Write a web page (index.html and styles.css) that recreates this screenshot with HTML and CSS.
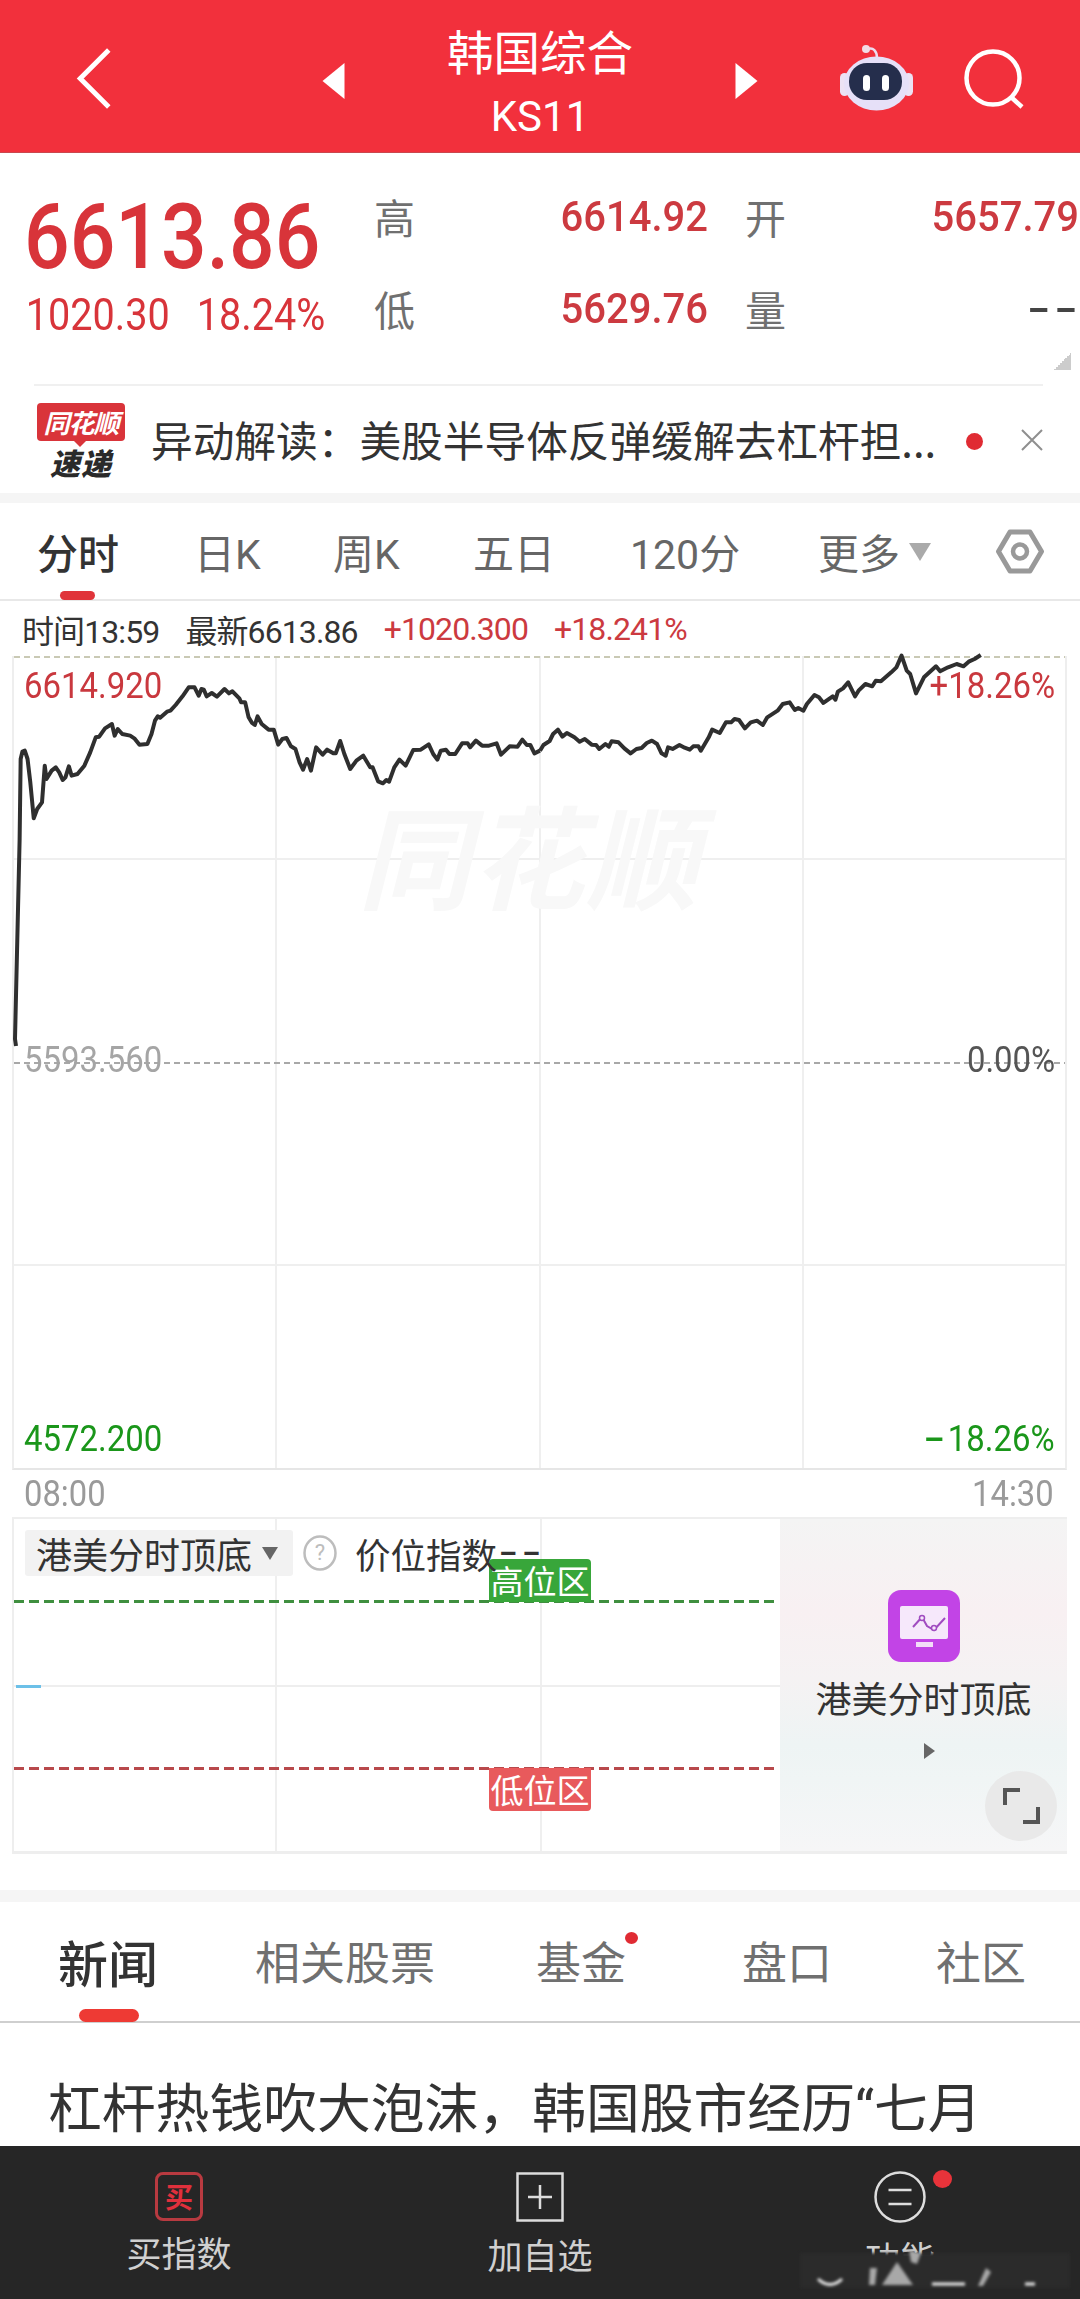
FILE: index.html
```html
<!DOCTYPE html>
<html lang="zh">
<head>
<meta charset="utf-8">
<title>韩国综合 KS11</title>
<link rel="stylesheet" href="styles.css">
</head>
<body>
<div class="page">
  <header class="hdr">
    <svg class="back" viewBox="0 0 36 64"><path d="M33 3 4 32l29 29" fill="none" stroke="#fff" stroke-width="5"/></svg>
    <svg class="arr arr-l" viewBox="0 0 22 36"><path d="M22 0v36L0 18z" fill="#fff"/></svg>
    <div class="hdr-title">
      <div class="hdr-name">韩国综合</div>
      <div class="hdr-code">KS11</div>
    </div>
    <svg class="arr arr-r" viewBox="0 0 22 36"><path d="M0 0v36l22-18z" fill="#fff"/></svg>
    <svg class="robot" viewBox="0 0 73 66">
      <path d="M28 4c5-2 9 2 9 9" fill="none" stroke="#ecdcf0" stroke-width="2.500"/>
      <circle cx="26" cy="4" r="4" fill="#f2dce6"/>
      <rect x="0" y="28" width="9" height="23" rx="4.500" fill="#ece2f4"/>
      <rect x="64" y="28" width="9" height="23" rx="4.500" fill="#ece2f4"/>
      <ellipse cx="36.500" cy="38.500" rx="32.500" ry="27" fill="#e6e0f8"/>
      <rect x="9" y="18" width="53" height="37" rx="18" fill="#252e4c"/>
      <rect x="23" y="30" width="7" height="16" rx="3.500" fill="#fff"/>
      <rect x="42" y="30" width="7" height="16" rx="3.500" fill="#fff"/>
    </svg>
    <svg class="search" viewBox="0 0 62 62"><circle cx="29" cy="29" r="26.500" fill="none" stroke="#fff" stroke-width="4.500"/><path d="M47 48l11 10" stroke="#fff" stroke-width="4.500" fill="none"/></svg>
  </header>

  <section class="quote">
    <div class="q-main">
      <div class="q-price">6613.86</div>
      <div class="q-change"><span>1020.30</span><span>18.24%</span></div>
    </div>
    <div class="q-grid">
      <span class="q-lab">高</span><span class="q-val">6614.92</span><span class="q-lab q-lab-2">开</span><span class="q-val">5657.79</span>
      <span class="q-lab">低</span><span class="q-val">5629.76</span><span class="q-lab q-lab-2">量</span><span class="q-val q-dash">--</span>
    </div>
    <div class="q-corner"></div>
  </section>

  <div class="news-bar">
    <div class="logo">
      <div class="logo-red">同花顺</div>
      <div class="logo-blk">速递</div>
    </div>
    <div class="news-txt">异动解读：美股半导体反弹缓解去杠杆担...</div>
    <span class="news-dot"></span>
    <svg class="news-x" viewBox="0 0 22 22"><path d="M1 1l20 20M21 1 1 21" stroke="#8f8f8f" stroke-width="2" fill="none"/></svg>
  </div>

  <div class="gap gap-1"></div>

  <nav class="ktabs">
    <span class="ktab ktab-on">分时</span>
    <span class="ktab ktab-2">日K</span>
    <span class="ktab ktab-3">周K</span>
    <span class="ktab ktab-4">五日</span>
    <span class="ktab ktab-5">120分</span>
    <span class="ktab ktab-6">更多<i class="more-tri"></i></span>
    <svg class="hex" viewBox="0 0 48 45"><path d="M14 3h20l11.500 19.500L34 42H14L2.500 22.500z" fill="none" stroke="#999" stroke-width="5" stroke-linejoin="round"/><circle cx="24" cy="22.500" r="7" fill="none" stroke="#999" stroke-width="4.500"/></svg>
  </nav>

  <div class="info">
    <span class="i-dark">时间13:59</span>
    <span class="i-dark">最新6613.86</span>
    <span class="i-red">+1020.300</span>
    <span class="i-red">+18.241%</span>
  </div>

  <div class="chart">
    <div class="grid-v"><i></i><i></i><i></i><i></i></div>
    <div class="grid-h"><i class="gh-top"></i><i></i><i class="gh-mid"></i><i></i></div>
    <div class="wm">同花顺</div>
    <div class="c-labels">
      <div class="c-row c-row-top"><span class="c-red">6614.920</span><span class="c-red">+18.26%</span></div>
      <div class="c-row c-row-mid"><span class="c-gray">5593.560</span><span class="c-dark">0.00%</span></div>
      <div class="c-row c-row-bot"><span class="c-green">4572.200</span><span class="c-green"><b class="c-hy">-</b>18.26%</span></div>
    </div>
    <svg class="c-line" viewBox="12 657 1055 812">
      <g class="ln">
        <path d="M16 1047 15 1040 19.630 840"/>
        <g transform="translate(0,640) scale(.34435,.33333)">
          <polyline points="57,600 60,360 65,338 72,335 80,360 88,430 98,538 108,510 122,490 130,380 135,420 150,395 162,385 172,400 182,423 190,415 200,382 208,410 225,405 245,380 262,340 278,295 288,293 305,268 325,255 333,290 342,270 355,285 378,290 390,298 405,317 428,315 440,285 450,245 458,232 465,236 485,218 495,215 510,198 530,172 548,145 565,145 577,170 585,150 592,152 600,172 615,162 630,173 652,150 665,163 675,157 695,178 700,190 712,190 722,235 732,252 740,258 748,232 760,255 780,272 795,272 808,317 820,300 832,297 845,322 858,330 870,370 880,392 892,360 903,395 918,325 937,347 950,332 968,343 975,343 988,306 1000,345 1017,390 1035,365 1055,350 1075,385 1082,385 1098,427 1112,433 1122,423 1130,428 1145,385 1160,362 1178,380 1200,333 1222,332 1245,316 1258,345 1270,362 1280,335 1295,332 1305,345 1322,345 1342,313 1358,313 1365,325 1382,305 1400,320 1420,320 1442,313 1455,347 1480,322 1503,323 1517,302 1530,318 1540,318 1552,343 1568,335"/>
        </g>
        <g transform="translate(540,640) scale(.34435,.33333)">
          <polyline points="0,335 10,318 28,306 38,285 52,272 65,293 78,282 100,295 115,308 130,300 150,317 163,318 172,330 190,315 200,323 208,307 228,310 245,328 263,343 280,330 295,327 310,312 325,305 340,315 353,343 365,350 372,325 385,330 405,318 420,326 435,332 445,322 460,322 467,335 490,295 500,272 522,282 540,250 555,250 565,240 578,243 595,268 612,250 630,245 647,258 660,235 690,215 705,195 725,190 740,213 750,207 765,215 775,195 797,168 810,175 823,192 850,172 858,182 865,158 880,148 895,130 915,172 925,155 945,135 965,142 975,125 990,127 1020,100 1035,85 1050,50 1065,95 1075,105 1092,163 1115,115 1150,82 1162,97 1185,85 1210,75 1230,82 1245,68 1262,60 1280,48"/>
        </g>
      </g>
    </svg>
  </div>

  <div class="axis"><span>08:00</span><span>14:30</span></div>

  <div class="sub">
    <div class="sub-plot">
      <div class="grid-v sub-v"><i></i><i></i></div>
      <div class="sub-mid"></div>
      <div class="sub-blue"></div>
      <div class="dash dash-g"></div>
      <div class="dash dash-r"></div>
      <span class="zone zone-g">高位区</span>
      <span class="zone zone-r">低位区</span>
      <div class="sub-head">
        <span class="chip">港美分时顶底<i class="chip-tri"></i></span>
        <svg class="q-ico" viewBox="0 0 34 36"><ellipse cx="17" cy="18" rx="15.500" ry="16.500" fill="none" stroke="#bdbdbd" stroke-width="2.500"/><text x="17" y="25" text-anchor="middle" class="q-ico-t">?</text></svg>
        <span class="sub-idx">价位指数<span class="sub-dd">--</span></span>
      </div>
    </div>
    <aside class="promo">
      <svg class="promo-ico" viewBox="0 0 72 72"><rect width="72" height="72" rx="13" fill="#c244e6"/><rect x="12" y="16" width="48" height="33" rx="2" fill="#f6e8fb"/><rect x="28" y="52" width="17" height="5" fill="#f3dcf8"/><path d="M25 37l9-10 5 9 7 4 11-12" fill="none" stroke="#a04cc0" stroke-width="2"/><circle cx="34" cy="28" r="2.500" fill="#f6e8fb" stroke="#a04cc0" stroke-width="1.500"/><circle cx="46" cy="38" r="2.500" fill="#f6e8fb" stroke="#a04cc0" stroke-width="1.500"/></svg>
      <div class="promo-t">港美分时顶底</div>
      <i class="promo-tri"></i>
      <span class="expand"><svg viewBox="0 0 37 36"><path d="M17 2H2v15M35 19v15H20" fill="none" stroke="#555" stroke-width="4"/></svg></span>
    </aside>
  </div>

  <div class="gap gap-2"></div>

  <nav class="ntabs">
    <span class="ntab ntab-on">新闻</span>
    <span class="ntab n2">相关股票</span>
    <span class="ntab n3">基金<i class="n-dot"></i></span>
    <span class="ntab n4">盘口</span>
    <span class="ntab n5">社区</span>
  </nav>

  <h1 class="headline">杠杆热钱吹大泡沫，韩国股市经历<span class="h-q">“</span>七月</h1>

  <footer class="foot">
    <div class="f-item">
      <span class="f-buy">买</span>
      <span class="f-lab f-lab-1">买指数</span>
    </div>
    <div class="f-item">
      <svg class="f-ico" viewBox="0 0 48 50"><rect x="1.500" y="1.500" width="45" height="47" fill="none" stroke="#ddd" stroke-width="2.500"/><path d="M24 13v24M12 25h24" stroke="#ddd" stroke-width="2.500"/></svg>
      <span class="f-lab">加自选</span>
    </div>
    <div class="f-item f-last">
      <svg class="f-ico-c" viewBox="0 0 52 52"><circle cx="26" cy="26" r="24.500" fill="none" stroke="#ddd" stroke-width="2.500"/><path d="M14.500 19h23M14.500 33h23" stroke="#ddd" stroke-width="2.500"/></svg>
      <i class="f-dot"></i>
      <span class="f-lab f-clip">功能</span>
    </div>
    <svg class="f-mark" viewBox="800 2246 270 46">
      <rect class="m-bg" x="800" y="2253" width="270" height="35"/>
      <path class="m-a" d="M818 2279q12 11 24 0"/>
      <path class="m-b" d="M870 2268l7 0-2 17-6 0z"/>
      <path class="m-b" d="M897 2262l16 23-31 0z"/>
      <path class="m-a" d="M932 2284h33"/>
      <path class="m-b" d="M986 2268l5 4-8 14-5 0z"/>
      <path class="m-b" d="M909 2250l12 3-4 11-6-2z"/>
      <path class="m-a" d="M1025 2284h10"/>
    </svg>
  </footer>
</div>
</body>
</html>
```
FILE: styles.css
```css
* { box-sizing: border-box; margin: 0; padding: 0; }
html, body { background: #fff; }
body { font-family: "Noto Sans CJK SC", "Noto Sans", sans-serif; }
i { font-style: normal; display: block; }
.page { position: relative; width: 1080px; height: 2299px; overflow: hidden; background: #fff; }

/* header */
.hdr { height: 153px; background: #f2303c; position: relative; display: flex; align-items: flex-start; color: #fff; border-bottom: 1px solid #c9484e; }
.back { position: absolute; left: 76px; top: 47px; width: 36px; height: 63px; }
.arr { position: absolute; top: 63px; width: 23px; height: 36px; }
.arr-l { left: 322px; }
.arr-r { left: 735px; }
.hdr-title { width: 100%; text-align: center; }
.hdr-name { font-size: 46.500px; line-height: 50px; margin-top: 25px; }
.hdr-code { font-family: Roboto, sans-serif; font-size: 42px; line-height: 44px; margin-top: 20px; }
.robot { position: absolute; left: 840px; top: 45px; width: 73px; height: 66px; }
.search { position: absolute; left: 964px; top: 49px; width: 62px; height: 62px; }

/* quote */
.quote { position: relative; height: 231px; display: flex; }
.q-main { width: 361px; padding: 38px 0 0 24px; font-family: Roboto, sans-serif; color: #d8343a; flex: none; }
.q-price { font-size: 90px; line-height: 94px; font-weight: 500; transform: scaleX(.893); transform-origin: left center; white-space: nowrap; }
.q-change { display: flex; gap: 30px; font-size: 44px; line-height: 50px; margin-top: 5px; padding-left: 2px; transform: scaleX(.9); transform-origin: left center; white-space: nowrap; }
.q-grid { display: grid; grid-template-columns: 40px 292px 80px 291px; grid-template-rows: 60px 60px; row-gap: 32px; padding-top: 33px; margin-left: 14px; align-items: center; }
.q-lab { font-size: 41px; color: #707070; line-height: 60px; margin-left: -1px; white-space: nowrap; }
.q-lab-2 { padding-left: 39px; }
.q-val { font-family: Roboto, sans-serif; font-size: 43px; color: #cc3a40; text-align: right; line-height: 60px; font-weight: 500; transform: scaleX(.93); transform-origin: right center; margin-right: -1px; }
.q-dash { color: #444; letter-spacing: 3px; transform: scaleX(1.55); margin-right: -4px; }
.q-corner { position: absolute; left: 1054px; top: 200px; width: 17px; height: 17px; background: linear-gradient(135deg, transparent 50%, #ccc 50%); }

/* news bar */
.news-bar { height: 109px; margin-left: 34px; margin-right: 37px; border-top: 2px solid #f0f0f0; display: flex; align-items: center; position: relative; }
.logo { width: 88px; margin-left: 3px; flex: none; }
.logo-red { background: #d9343a; color: #fff; height: 38px; border-radius: 4px; font-size: 26px; line-height: 38px; font-weight: 700; font-style: italic; text-align: center; letter-spacing: -1px; position: relative; }
.logo-red::after { content: ""; position: absolute; left: 36px; bottom: -6px; border: 7px solid transparent; border-bottom: 0; border-top-color: #d9343a; }
.logo-blk { font-size: 30px; line-height: 30px; font-weight: 900; font-style: italic; color: #2a2a2a; margin-top: 6px; text-align: center; letter-spacing: 1px; }
.news-txt { font-size: 41.700px; color: #333; margin-left: 26px; margin-top: -2px; width: 800px; line-height: 50px; white-space: nowrap; }
.news-dot { position: absolute; left: 932px; top: 47px; width: 17px; height: 17px; border-radius: 50%; background: #e02b33; }
.news-x { position: absolute; left: 987px; top: 43px; width: 22px; height: 22px; }

.gap { background: #f5f5f5; }
.gap-1 { height: 10px; }
.gap-2 { height: 12px; margin-top: 36px; }

/* period tabs */
.ktabs { height: 98px; position: relative; border-bottom: 2px solid #e8e8e8; }
.ktab { position: absolute; top: 27px; font-size: 41px; line-height: 50px; color: #666; font-family: Roboto, "Noto Sans CJK SC", sans-serif; white-space: nowrap; }
.ktab-on { left: 37px; color: #333; font-weight: 500; }
.ktab-on::after { content: ""; position: absolute; left: 23px; top: 61px; width: 35px; height: 9px; border-radius: 5px; background: #e0343a; }
.ktab-2 { left: 194px; }
.ktab-3 { left: 333px; }
.ktab-4 { left: 473px; }
.ktab-5 { left: 630px; }
.ktab-6 { left: 818px; }
.more-tri { position: absolute; left: 91px; top: 13px; border: 11.500px solid transparent; border-bottom: 0; border-top: 18px solid #aaa; }
.hex { position: absolute; left: 996px; top: 26px; width: 48px; height: 45px; }

/* info */
.info { height: 55px; padding-left: 22px; display: flex; align-items: center; gap: 26px; font-size: 32px; font-family: Roboto, "Noto Sans CJK SC", sans-serif; letter-spacing: -.900px; white-space: nowrap; }
.i-dark { color: #333; }
.i-red { color: #cc3a40; }

/* chart */
.chart { position: relative; height: 814px; margin: 0 13px 0 12px; border-left: 2px solid #eee; border-right: 2px solid #eee; border-bottom: 2px solid #e6e6e6; }
.grid-v { position: absolute; inset: 0; display: flex; }
.grid-v i { flex: 1; border-right: 2px solid #efefef; }
.grid-v i:last-child { border-right: 0; }
.grid-h { position: absolute; inset: 0; display: flex; flex-direction: column; }
.grid-h i { flex: 1; border-top: 2px solid #efefef; }
.grid-h .gh-top { border-top: 0; background: repeating-linear-gradient(90deg, #c9c9b4 0 6px, transparent 6px 10px) top / 100% 2px no-repeat; }
.grid-h .gh-mid { border-top: 0; background: repeating-linear-gradient(90deg, #a8a8a8 0 6px, transparent 6px 10px) top / 100% 2px no-repeat; }
.wm { position: absolute; left: 344px; top: 126px; font-size: 112px; line-height: 140px; font-weight: 700; font-style: italic; color: #f8f8f8; letter-spacing: 2px; white-space: nowrap; }
.c-labels { position: absolute; inset: 0; font-family: Roboto, sans-serif; font-size: 37px; }
.c-row { position: absolute; left: 10px; right: 10px; display: flex; justify-content: space-between; line-height: 40px; }
.c-row > span { white-space: nowrap; transform: scaleX(.89); }
.c-row > span:first-child { transform-origin: left center; }
.c-row > span:last-child { transform-origin: right center; }
.c-hy { display: inline-block; font-weight: 500; transform: scaleX(1.9); transform-origin: right center; margin: 0 3px 0 12px; }
.c-row-top { top: 10px; }
.c-row-mid { top: 384px; }
.c-row-bot { top: 763px; }
.c-red { color: #c9383e; }
.c-gray { color: #a5a5a5; }
.c-dark { color: #555; }
.c-green { color: #1a961a; }
.c-line { position: absolute; left: -2px; top: 0; width: 1055px; height: 812px; overflow: visible; }
.ln path, .ln polyline { fill: none; stroke: #2f2f2f; stroke-width: 4px; stroke-linejoin: round; vector-effect: non-scaling-stroke; }

.axis { height: 47px; margin: 0 26px 0 24px; display: flex; justify-content: space-between; align-items: center; font-family: Roboto, sans-serif; font-size: 36px; color: #9a9a9a; }
.axis span { transform: scaleX(.91); }
.axis span:first-child { transform-origin: left center; }
.axis span:last-child { transform-origin: right center; }

/* sub chart */
.sub { height: 337px; margin: 0 13px 0 12px; display: flex; border: 2px solid #eee; border-bottom-width: 3px; border-right: 0; }
.sub-plot { position: relative; flex: 1; }
.sub-v i { flex: none; width: 263px; }
.sub-v i + i { width: 265px; }
.sub-v i:last-child { border-right: 2px solid #efefef; }
.sub-mid { position: absolute; left: 0; right: 0; top: 166px; border-top: 2px solid #eee; }
.sub-blue { position: absolute; left: 2px; top: 166px; width: 25px; height: 3px; background: #6cc0e8; }
.dash { position: absolute; left: 0; right: 4px; height: 3px; }
.dash-g { top: 81px; background: repeating-linear-gradient(90deg, #3f8f3f 0 10px, transparent 10px 15px); }
.dash-r { top: 248px; background: repeating-linear-gradient(90deg, #b8494c 0 10px, transparent 10px 15px); }
.sub-head { position: absolute; left: 11px; top: 11px; display: flex; align-items: center; height: 46px; }
.chip { display: flex; align-items: center; width: 268px; height: 46px; padding-left: 11px; background: #f2f2f2; border-radius: 3px; font-size: 36px; color: #333; white-space: nowrap; position: relative; }
.chip-tri { position: absolute; left: 237px; top: 17px; border: 8px solid transparent; border-bottom: 0; border-top: 13px solid #666; }
.q-ico { width: 34px; height: 36px; margin-left: 10px; flex: none; }
.q-ico-t { font-family: Roboto, sans-serif; font-size: 22px; fill: #bdbdbd; }
.sub-idx { font-size: 35.500px; color: #333; margin-left: 18px; white-space: nowrap; }
.sub-dd { display: inline-block; font-family: Roboto, sans-serif; font-weight: 500; letter-spacing: 3px; margin-left: 2px; transform: translateY(-5px) scaleX(1.55); transform-origin: left center; }
.zone { position: absolute; left: 475px; width: 102px; height: 43px; text-align: center; color: #fff; font-size: 33px; line-height: 42px; }
.zone-g { top: 40px; background: #38a63a; border-radius: 4px 4px 0 0; }
.zone-r { top: 249px; background: #e85a5c; border-radius: 0 0 4px 4px; }
.promo { position: relative; width: 287px; flex: none; background: linear-gradient(180deg, #f4f4f4 0%, #f8f0f2 28%, #f5f2f3 48%, #eef4f4 68%, #f0f5f5 78%, #f6f6f7 100%); display: flex; flex-direction: column; align-items: center; }
.promo-ico { width: 72px; height: 72px; margin-top: 71px; flex: none; }
.promo-t { font-size: 36px; color: #333; line-height: 40px; margin-top: 15px; white-space: nowrap; }
.promo-tri { border: 8px solid transparent; border-right: 0; border-left: 11px solid #666; margin-top: 26px; margin-left: 11px; }
.expand { position: absolute; left: 205px; top: 252px; width: 72px; height: 70px; border-radius: 50%; background: #e9e9e9; display: flex; align-items: center; justify-content: center; }
.expand svg { width: 37px; height: 36px; }

/* news tabs */
.ntabs { position: relative; height: 121px; border-bottom: 2px solid #cfcfcf; }
.ntab { position: absolute; top: 29px; font-size: 45px; line-height: 60px; color: #707070; white-space: nowrap; }
.ntab-on { left: 58px; font-size: 50px; color: #333; font-weight: 500; }
.ntab-on::after { content: ""; position: absolute; left: 21px; top: 78px; width: 60px; height: 13px; border-radius: 7px; background: #ee3a34; }
.n2 { left: 255px; }
.n3 { left: 536px; }
.n4 { left: 742px; }
.n5 { left: 936px; }
.n-dot { position: absolute; left: 89px; top: 1px; width: 13px; height: 12px; border-radius: 50%; background: #e02b33; }

.headline { font-size: 53.800px; font-weight: 400; color: #333; margin-left: 48px; line-height: 70px; margin-top: 47px; white-space: nowrap; }
.h-q { font-family: Roboto, sans-serif; }

/* footer */
.foot { position: absolute; left: 0; right: 0; bottom: 0; height: 153px; background: #262626; display: grid; grid-template-columns: 360px 360px 360px; }
.f-item { position: relative; display: flex; flex-direction: column; align-items: center; padding-top: 26px; }
.f-buy { width: 48px; height: 49px; border: 3px solid #b83a40; border-radius: 8px; color: #e0303c; font-size: 28px; font-weight: 700; line-height: 42px; text-align: center; }
.f-ico { width: 48px; height: 50px; display: block; }
.f-ico-c { width: 52px; height: 52px; display: block; margin-top: -1px; }
.f-lab { font-size: 35px; line-height: 42px; color: #d0d0d0; margin-top: 11px; white-space: nowrap; }
.f-lab-1 { margin-top: 10px; }
.f-item:nth-child(1) { left: -1px; }
.f-dot { position: absolute; left: 213px; top: 24px; width: 19px; height: 18px; border-radius: 50%; background: #e8333a; }
.f-clip { height: 28px; overflow: hidden; margin-top: 13px; line-height: 42px; }
.f-mark { position: absolute; left: 800px; top: 100px; width: 270px; height: 46px; filter: blur(1.500px); }
.m-bg { fill: #2b2b2b; }
.m-a { fill: none; stroke: #f0f0f0; stroke-width: 3; }
.m-b { fill: #a8a8a8; }
```
